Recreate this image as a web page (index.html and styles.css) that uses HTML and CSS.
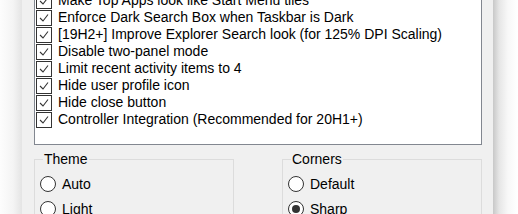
FILE: index.html
```html
<!DOCTYPE html>
<html lang="en">

<head>
    <meta charset="UTF-8">
    <title>Taskbar Settings</title>
    <link rel="stylesheet" href="styles.css">
</head>

<body>
<div class="screen">
    <div class="shadow-left"></div>

    <div class="window">
        <div class="listbox">
            <ul class="options">
                <li><span class="check"></span>Make Top Apps look like Start Menu tiles</li>
                <li><span class="check"></span>Enforce Dark Search Box when Taskbar is Dark</li>
                <li><span class="check"></span>[19H2+] Improve Explorer Search look (for 125% DPI Scaling)</li>
                <li><span class="check"></span>Disable two-panel mode</li>
                <li><span class="check"></span>Limit recent activity items to 4</li>
                <li><span class="check"></span>Hide user profile icon</li>
                <li><span class="check"></span>Hide close button</li>
                <li><span class="check"></span>Controller Integration (Recommended for 20H1+)</li>
            </ul>
        </div>

        <div class="groups">
            <fieldset class="group">
                <legend>Theme</legend>
                <label class="radio"><span class="dot"></span>Auto</label>
                <label class="radio"><span class="dot"></span>Light</label>
            </fieldset>
            <fieldset class="group">
                <legend>Corners</legend>
                <label class="radio"><span class="dot"></span>Default</label>
                <label class="radio"><span class="dot on"></span>Sharp</label>
            </fieldset>
        </div>
    </div>

    <div class="shadow-right"></div>
</div>
</body>

</html>
```

FILE: styles.css
```css
body {
    margin: 0;
    padding: 0;
    background-color: #fff;
    font-family: 'Liberation Sans', Arial, sans-serif;
    font-size: 14px;
    color: #000;
    overflow: hidden;
}

.screen {
    display: flex;
    height: 214px;
    overflow: hidden;
}

.shadow-left {
    width: 22px;
    background: linear-gradient(to right, #fdfdfd, #f4f4f4 60%, #e4e4e4);
}

.shadow-right {
    flex: 1;
    background: linear-gradient(to right, #c8c8c8, #e6e6e6 25%, #f8f8f8 60%, #fff);
}

.window {
    width: 471px;
    background-color: #f0f0f0;
    padding-left: 12px;
    box-sizing: border-box;
}

.listbox {
    width: 448px;
    height: 154px;
    margin-top: -9px;
    background-color: #fff;
    border: 1px solid #828790;
    box-sizing: border-box;
}

.options {
    list-style: none;
    margin: 0;
    padding: 0 0 0 1px;
}

.options li {
    display: flex;
    align-items: center;
    height: 17px;
    line-height: 17px;
    white-space: nowrap;
}

.check {
    width: 16px;
    height: 16px;
    margin-right: 6px;
    border: 1px solid #333;
    box-sizing: border-box;
    background: #fff url("data:image/svg+xml,%3Csvg xmlns='http://www.w3.org/2000/svg' width='14' height='14'%3E%3Cpath d='M3 7 L6 10 L11 3.5' fill='none' stroke='%23333' stroke-width='1.1'/%3E%3C/svg%3E") no-repeat center;
}

.groups {
    display: flex;
    gap: 48px;
    margin-top: 6px;
}

.group {
    width: 200px;
    height: 80px;
    margin: 0;
    padding: 0;
    border: 1px solid #dcdcdc;
    box-sizing: border-box;
}

.group legend {
    margin-left: 8px;
    padding: 0 1px;
    line-height: 17px;
}

.radio {
    display: flex;
    align-items: center;
    height: 25px;
    margin-left: 5px;
}

.radio:first-of-type {
    margin-top: 3px;
}

.dot {
    width: 16px;
    height: 16px;
    margin-right: 6px;
    border: 1px solid #333;
    border-radius: 50%;
    background-color: #fff;
    box-sizing: border-box;
    position: relative;
}

.dot.on::after {
    content: '';
    position: absolute;
    left: 3px;
    top: 3px;
    width: 8px;
    height: 8px;
    border-radius: 50%;
    background-color: #333;
}
```
